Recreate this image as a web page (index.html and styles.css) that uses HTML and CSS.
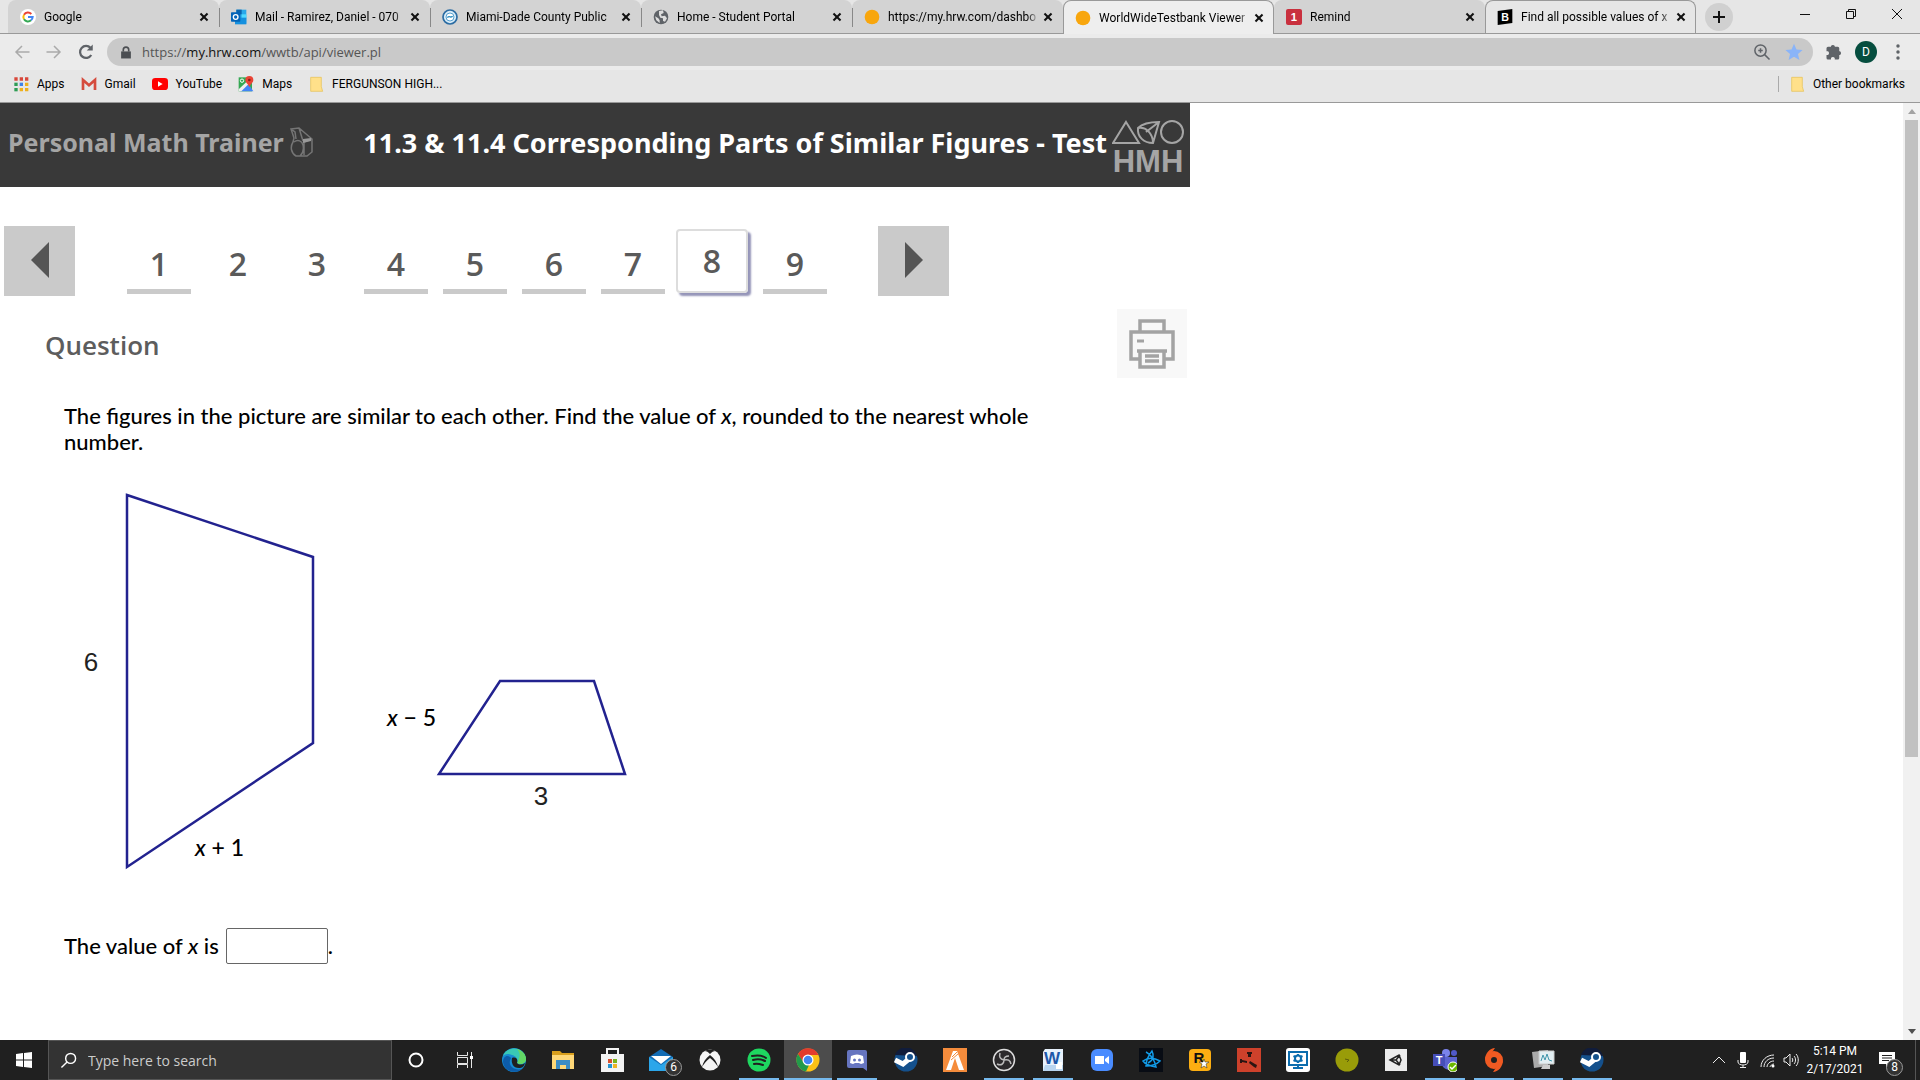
FILE: index.html
```
<!DOCTYPE html>
<html lang="en">
<head>
<meta charset="utf-8">
<title>WorldWideTestbank Viewer</title>
<link rel="stylesheet" href="styles.css">
</head>
<body>

<!-- browser tabs -->
<div class="tabstrip">
	<div class="tab">
		<svg class="favicon" viewBox="0 0 24 24"><circle cx="12" cy="12" r="12" fill="#fff"/><path d="M17 7.500A7 7 0 0 0 6 8.500" fill="none" stroke="#ea4335" stroke-width="3"/><path d="M6 8.500a7 7 0 0 0 0 7" fill="none" stroke="#fbbc05" stroke-width="3"/><path d="M6 15.500a7 7 0 0 0 10.500 1.500" fill="none" stroke="#34a853" stroke-width="3"/><path d="M12 12h7a7 7 0 0 1-2.500 5" fill="none" stroke="#4285f4" stroke-width="3"/></svg>
		<span class="tab-title">Google</span><button class="close" aria-label="Close"></button>
	</div>
	<div class="tab">
		<svg class="favicon" viewBox="0 0 24 24"><path d="M8 1h15v21H8z" fill="#28a8ea"/><path d="M8 1h8v7H8z" fill="#0a64ad"/><path d="M16 8h7v6h-7z" fill="#50d9ff"/><path d="M6 13l17 0v10H6z" fill="#1490df"/><rect y="5" width="14" height="14" rx="1" fill="#0364b8"/><circle cx="7" cy="12" r="3.500" fill="none" stroke="#fff" stroke-width="2"/></svg>
		<span class="tab-title">Mail - Ramirez, Daniel - 070</span><button class="close" aria-label="Close"></button>
	</div>
	<div class="tab">
		<svg class="favicon" viewBox="0 0 24 24"><circle cx="12" cy="12" r="10.500" fill="#d9ecf8" stroke="#2b6ca3" stroke-width="2.500"/><circle cx="12" cy="12" r="6" fill="#fff" stroke="#5aa2d0" stroke-width="1.500"/><path d="M8 13c3-4 5 1 8-2" fill="none" stroke="#2b8cc0" stroke-width="2"/></svg>
		<span class="tab-title">Miami-Dade County Public</span><button class="close" aria-label="Close"></button>
	</div>
	<div class="tab">
		<svg class="favicon" viewBox="0 0 24 24"><circle cx="12" cy="12" r="11" fill="#5f6368"/><path d="M9 3l6-1 1 4-4 2 1 3 5-1 3 4-3 5-3-1v-4l-4-1-2-4zM3 11l5 3 2 3v4l-5-4z" fill="#ddd"/></svg>
		<span class="tab-title">Home - Student Portal</span><button class="close" aria-label="Close"></button>
	</div>
	<div class="tab">
		<svg class="favicon" viewBox="0 0 24 24"><circle cx="12" cy="12" r="11" fill="#f8a60d"/></svg>
		<span class="tab-title">https://my.hrw.com/dashbo</span><button class="close" aria-label="Close"></button>
	</div>
	<div class="tab active">
		<svg class="favicon" viewBox="0 0 24 24"><circle cx="12" cy="12" r="11" fill="#f8a60d"/></svg>
		<span class="tab-title">WorldWideTestbank Viewer</span><button class="close" aria-label="Close"></button>
	</div>
	<div class="tab">
		<svg class="favicon" viewBox="0 0 24 24"><rect width="24" height="24" rx="3" fill="#c9303e"/><text x="12" y="18" class="icon-text" font-size="17">1</text></svg>
		<span class="tab-title">Remind</span><button class="close" aria-label="Close"></button>
	</div>
	<div class="tab light">
		<svg class="favicon" viewBox="0 0 24 24"><path d="M1 3l22-3v21L1 24z"/><text x="12" y="18" class="icon-text" font-size="16">B</text></svg>
		<span class="tab-title">Find all possible values of x</span><button class="close" aria-label="Close"></button>
	</div>
	<button class="new-tab" aria-label="New tab"></button>
	<div class="window-buttons">
		<button aria-label="Minimize"><svg viewBox="0 0 12 12"><path d="M1 6.500h10"/></svg></button>
		<button aria-label="Restore"><svg viewBox="0 0 12 12"><path d="M1.500 3.500h7v7h-7zM3.500 3.500v-2h7v7h-2"/></svg></button>
		<button aria-label="Close window"><svg viewBox="0 0 12 12"><path d="M1 1l10 10M11 1L1 11"/></svg></button>
	</div>
</div>

<!-- address bar -->
<div class="toolbar">
	<button class="nav-btn faded" aria-label="Back"><svg viewBox="0 0 24 24"><path d="M22 12H4M12 4l-8 8 8 8"/></svg></button>
	<button class="nav-btn faded" aria-label="Forward"><svg viewBox="0 0 24 24"><path d="M2 12h18M12 4l8 8-8 8"/></svg></button>
	<button class="nav-btn" aria-label="Reload"><svg viewBox="0 0 24 24"><path d="M19 16a8 8 0 1 1-1-9.500"/><path d="M21 2v8h-8z" fill="#5f6368" stroke="none"/></svg></button>
	<div class="omnibox">
		<svg class="lock" viewBox="0 0 24 24"><path d="M3 10h18v13H3z" fill="#4b4e52"/><path d="M7 10V7a5 5 0 0 1 10 0v3" fill="none" stroke="#4b4e52" stroke-width="3"/></svg>
		<span class="url">https://<b>my.hrw.com</b>/wwtb/api/viewer.pl</span>
		<button class="nav-btn" aria-label="Zoom"><svg viewBox="0 0 24 24"><circle cx="10" cy="10" r="7.500" stroke-width="2"/><path d="M15.500 15.500L22 22M7 10h6M10 7v6" stroke-width="2"/></svg></button>
		<button class="nav-btn" aria-label="Bookmark"><svg viewBox="0 0 24 24"><path d="M12 1l3.300 7.500 8.200.7-6.200 5.400 1.900 8L12 18.300 4.800 22.600l1.900-8L.5 9.200l8.200-.7z" fill="#8ab4f8" stroke="none"/></svg></button>
	</div>
	<button class="nav-btn" aria-label="Extensions"><svg viewBox="0 0 24 24"><path d="M20 11h-1V7a2 2 0 0 0-2-2h-4V4a3 3 0 0 0-5 0v1H4a2 2 0 0 0-2 2v4h2a3 3 0 0 1 0 5H2v4a2 2 0 0 0 2 2h4v-2a3 3 0 0 1 5 0v2h4a2 2 0 0 0 2-2v-4h1a3 3 0 0 0 0-5z" fill="#5f6368" stroke="none"/></svg></button>
	<button class="avatar">D</button>
	<button class="nav-btn" aria-label="Menu"><svg viewBox="0 0 24 24"><g fill="#5f6368" stroke="none"><circle cx="12" cy="4" r="2.300"/><circle cx="12" cy="12" r="2.300"/><circle cx="12" cy="20" r="2.300"/></g></svg></button>
</div>

<div class="bookmarks">
	<a href="#"><svg viewBox="0 0 24 24"><path d="M2 2h5v5H2zM10 2h5v5h-5zM18 2h5v5h-5z" fill="#d8473a"/><path d="M2 10h5v5H2z" fill="#2e9c55"/><path d="M10 10h5v5h-5z" fill="#3f83e8"/><path d="M18 10h5v5h-5zM10 18h5v5h-5zM18 18h5v5h-5z" fill="#eeb01d"/><path d="M2 18h5v5H2z" fill="#2e9c55"/></svg>Apps</a>
	<a href="#"><svg viewBox="0 0 24 24"><path d="M3 21V6l9 8 9-8v15" fill="none" stroke="#d54b3d" stroke-width="4"/></svg>Gmail</a>
	<a href="#"><svg viewBox="0 0 24 24"><rect y="3" width="24" height="18" rx="5" fill="#f00"/><path d="M9 8l7 4-7 4z" fill="#fff"/></svg>YouTube</a>
	<a href="#"><svg viewBox="0 0 24 24"><path d="M1 2h20v21H1z" fill="#34a853"/><path d="M3 23L15 11l8 12z" fill="#4285f4"/><path d="M1 20L19 3l3 3L5 23H1z" fill="#eee"/><path d="M17 0a6 6 0 0 1 6 6c0 4-4 5-6 11-2-6-6-7-6-11a6 6 0 0 1 6-6z" fill="#ea4335"/><circle cx="17" cy="6" r="2" fill="#8c1e17"/><circle cx="6" cy="7" r="2.500" fill="none" stroke="#fff" stroke-width="1.500"/></svg>Maps</a>
	<a href="#"><svg viewBox="0 0 24 24"><path d="M4 2h16v14l2 7H4z" fill="#ffe08a" stroke="#e5c04f"/></svg>FERGUNSON HIGH...</a>
	<a href="#" class="other"><svg viewBox="0 0 24 24"><path d="M4 2h16v14l2 7H4z" fill="#ffe08a" stroke="#e5c04f"/></svg>Other bookmarks</a>
</div>

<!-- page -->
<div class="viewport">
	<main class="trainer">
		<header class="banner">
			<span class="brand">Personal Math Trainer</span>
			<svg class="whistle" viewBox="0 0 24 30"><path d="M1 2l8-1 13 11v13l-5 4-11 0c-5-3-6-9-3-14l1-4zM9 1l4 13M14 15v13M22 12l-8 3M4 15c4-3 8-1 9 3s0 8-3 11M1 2l4 3 1 7" fill="none" stroke="#757575" stroke-width="1.500"/><path d="M13 12l8-1v3l-8 2z" fill="#999"/></svg>
			<h1>11.3 &amp; 11.4 Corresponding Parts of Similar Figures - Test</h1>
			<svg class="hmh" viewBox="0 0 72 54"><g fill="none" stroke="#a5a5a5" stroke-width="2"><path d="M14 3l13 21H1z"/><path d="M26 9c5-5 13-6 21-6l-6 21C32 24 25 18 26 9zM26 9c8-2 15 6 15 15M47 3L34 13"/><circle cx="60" cy="13" r="11"/></g><text x="36" y="53" class="hmh-text">HMH</text></svg>
		</header>

		<nav class="pager">
			<button class="arrow" aria-label="Previous"><svg viewBox="0 0 18 36"><path d="M18 0v36L0 18z"/></svg></button>
			<ol class="numbers">
				<li class="done"><a href="#">1</a></li>
				<li><a href="#">2</a></li>
				<li><a href="#">3</a></li>
				<li class="done"><a href="#">4</a></li>
				<li class="done"><a href="#">5</a></li>
				<li class="done"><a href="#">6</a></li>
				<li class="done"><a href="#">7</a></li>
				<li class="current"><a href="#">8</a></li>
				<li class="done"><a href="#">9</a></li>
			</ol>
			<button class="arrow" aria-label="Next"><svg viewBox="0 0 18 36"><path d="M0 0v36l18-18z"/></svg></button>
		</nav>

		<div class="question-head">
			<h2>Question</h2>
			<button class="print" aria-label="Print"><svg viewBox="0 0 46 50"><path d="M11 13V2h24v11M11 40H2V13h42v27h-9M8 32h30M11 32v16h24V32M16 37h14M16 42h14" fill="none" stroke="#a3a3a3" stroke-width="3.500"/><path d="M8 22h7" stroke="#a3a3a3" stroke-width="3"/></svg></button>
		</div>

		<section class="question">
			<p>The figures in the picture are similar to each other. Find the value of <i>x</i>, rounded to the nearest whole number.</p>
			<svg class="figure" width="600" height="400" viewBox="0 0 600 400">
				<path d="M63 15l186 62v186L63 387z"/>
				<path d="M436 201h94l31 93H375z"/>
				<text x="27" y="191" class="side">6</text>
				<text x="477" y="325" class="side">3</text>
				<text x="323" y="246"><tspan class="var">x</tspan> − 5</text>
				<text x="131" y="376"><tspan class="var">x</tspan> + 1</text>
			</svg>
			<p class="answer"><label for="answer">The value of <i>x</i> is</label><input id="answer" type="text">.</p>
		</section>
	</main>
	<div class="scrollbar"><span class="up"></span><span class="thumb"></span><span class="down"></span></div>
</div>

<!-- taskbar -->
<footer class="taskbar">
	<button class="start" aria-label="Start"><svg viewBox="0 0 16 16"><path d="M0 2l7-1v6.500H0zM8 1l8-1v7.500H8zM0 8.500h7V15l-7-1zM8 8.500h8V16l-8-1z" fill="#fff"/></svg></button>
	<label class="search"><svg viewBox="0 0 24 24"><circle cx="15" cy="9" r="7"/><path d="M10 14l-8 8"/></svg><input type="text" placeholder="Type here to search" aria-label="Search"></label>
	<div class="apps">
		<button class="app" aria-label="Cortana"><svg viewBox="0 0 24 24"><circle cx="12" cy="12" r="6.500" fill="none" stroke="#fff" stroke-width="2"/></svg></button>
		<button class="app" aria-label="Task View"><svg viewBox="0 0 24 24"><path d="M4.500 4v3.500h10V4M4.500 9.500h10v6h-10zM4.500 20v-3.500h10V20M18.500 4v16" fill="none" stroke="#e6e6e6" stroke-width="1"/><path d="M17 8h3v3h-3z" fill="#fff"/></svg></button>
		<button class="app" aria-label="Edge"><svg viewBox="0 0 24 24"><circle cx="12" cy="12" r="12" fill="#168bd2"/><path d="M1 8C4-2 22-3 24 11c0 5-6 6-9 4 2-3-1-7-5-8C6 5 3 6 1 8z" fill="#39c9b5"/><path d="M15 1c6 2 9 6 9 10 0 5-6 6-9 4 3-6 4-9 0-14z" fill="#62d765"/><path d="M9 10c-4 7 2 13 11 11-7 6-18 2-19-7 0-6 5-8 8-4z" fill="#0d5ca9"/><path d="M10 10c5-2 6 3 5 5 2 2 5 2 8 0-1 4-3 5-6 5-6 0-8-5-7-10z" fill="#202020"/></svg></button>
		<button class="app" aria-label="File Explorer"><svg viewBox="0 0 24 24"><path d="M1 3h8l2 2h12v16H1z" fill="#d99f1d"/><path d="M1 7h22v14H1z" fill="#ffd878"/><path d="M5 21v-9h14v9h-4v-4H9v4z" fill="#3d8dc4"/></svg></button>
		<button class="app" aria-label="Store"><svg viewBox="0 0 24 24"><path d="M1 6h23v18H1z" fill="#f3f3f3"/><path d="M7 7V1h11v6" fill="none" stroke="#f3f3f3" stroke-width="2"/><path d="M8 11h4v4H8z" fill="#d8502e"/><path d="M13 11h4v4h-4z" fill="#7ab51d"/><path d="M8 16h4v4H8z" fill="#2694d1"/><path d="M13 16h4v4h-4z" fill="#f0b323"/></svg></button>
		<button class="app" aria-label="Mail"><svg viewBox="0 0 24 24"><path d="M0 9L12 1l12 8v14H0z" fill="#126cb5"/><path d="M0 9l12 8 12-8v14H0z" fill="#2ba6ea"/><path d="M2 8h20l-10 8z" fill="#fff"/></svg><span class="badge">6</span></button>
		<button class="app" aria-label="Xbox"><svg viewBox="0 0 24 24"><circle cx="12" cy="12" r="10.500" fill="#f4f4f4"/><path d="M6 3c3 0 4 1 6 3 2-2 3-3 6-3-2-1-4-1.500-6-1.500S8 2 6 3z" fill="#202020"/><path d="M4 19c1-5 4-9 8-12 4 3 7 7 8 12-2-3-4-6-8-9-4 3-6 6-8 9z" fill="#202020"/></svg></button>
		<button class="app open" aria-label="Spotify"><svg viewBox="0 0 24 24"><circle cx="12" cy="12" r="11.500" fill="#1ed760"/><path d="M5 8c5-1 10-1 14 2M6 12c4-1 8-1 12 1M7 16c3-1 6 0 9 1" fill="none" stroke="#202020" stroke-width="2" stroke-linecap="round"/></svg></button>
		<button class="app open focus" aria-label="Chrome"><svg viewBox="0 0 24 24"><circle cx="12" cy="12" r="11.500" fill="#fbc116"/><path d="M2 6a11.500 11.500 0 0 1 20.500 1H12l-5 7z" fill="#e33b2e"/><path d="M2 6l6 9 5 2-3 6.400A11.500 11.500 0 0 1 2 6z" fill="#229a4b"/><circle cx="12" cy="12" r="5.500" fill="#fff"/><circle cx="12" cy="12" r="4.300" fill="#4285f4"/></svg></button>
		<button class="app open" aria-label="Discord"><svg viewBox="0 0 24 24"><path d="M4 2h16a2 2 0 0 1 2 2v19l-4-3H4a2 2 0 0 1-2-2V4a2 2 0 0 1 2-2z" fill="#6675c0"/><path d="M6 8c4-2 8-2 12 0l1 7-3 1-2-1h-4l-2 1-3-1z" fill="#fff"/><circle cx="9.500" cy="12" r="1.500" fill="#6675c0"/><circle cx="14.500" cy="12" r="1.500" fill="#6675c0"/></svg></button>
		<button class="app" aria-label="Steam"><svg viewBox="0 0 24 24"><circle cx="12" cy="12" r="11.500" fill="#14508c"/><path d="M1 7A11.500 11.500 0 0 1 23 8z" fill="#101c3b"/><path d="M1 12l8 4 6-5" fill="none" stroke="#fff" stroke-width="5"/><circle cx="16" cy="9" r="4" fill="#14508c" stroke="#fff" stroke-width="2"/></svg></button>
		<button class="app" aria-label="FiveM"><svg viewBox="0 0 24 24"><path d="M0 0h24v24H0z" fill="#f58c3c"/><path d="M3 22L10 3h4l7 19h-5l-4-12-4 12z" fill="#fff"/><path d="M9 9l5-5M8 12l7-6" stroke="#f58c3c"/></svg></button>
		<button class="app open" aria-label="OBS"><svg viewBox="0 0 24 24"><circle cx="12" cy="12" r="10.500" fill="#2b292b" stroke="#ddd" stroke-width="1.500"/><path d="M8 5c-1 4 0 6 4 7 4-1 6 0 7 4M12 12c0 4-3 6-7 4M12 12c0-3 2-4 5-4" fill="none" stroke="#bbb" stroke-width="1.500"/></svg></button>
		<button class="app open" aria-label="Word"><svg viewBox="0 0 24 24"><path d="M4 1h18v22H2V4z" fill="#e7f1fc"/><path d="M4 17h18v6H2z" fill="#b9d5f0"/><path d="M15 14h6v7h-6z" fill="#fff"/><text x="11" y="16" font-size="17" class="icon-text word">W</text></svg></button>
		<button class="app" aria-label="Zoom"><svg viewBox="0 0 24 24"><rect x="1" y="1" width="22" height="22" rx="6" fill="#4a8cff"/><path d="M5 8h9v8H5zM15 11l4-3v8l-4-3z" fill="#fff"/></svg></button>
		<button class="app" aria-label="Battle.net"><svg viewBox="0 0 24 24"><path d="M0 0h24v24H0z" fill="#080c14"/><path d="M7 4c4 2 9 8 10 15-6-1-11-3-13-6 4-3 10-4 17 0-3 3-9 5-14 5 0-5 2-10 6-15 2 4 2 9-4 12" fill="none" stroke="#129be8" stroke-width="1.500"/></svg></button>
		<button class="app" aria-label="Rockstar"><svg viewBox="0 0 24 24"><rect x="1" y="1" width="22" height="22" rx="4" fill="#fcae12"/><text x="11" y="15" font-size="15" class="icon-text dark">R</text><path d="M16 11l1 3h4l-3 2 1 4-3-2-3 2 1-4-3-2h4z" fill="#fff" stroke="#222" stroke-width=".5"/></svg></button>
		<button class="app" aria-label="Rust"><svg viewBox="0 0 24 24"><path d="M0 0h24v24H0z" fill="#cd412b"/><path d="M10 4h5v2h-1v3h-3V6h-1zM3 11h2v1l5 1v2l-5-1v1H3zM13 13l5 3 2 1-1 3-2-1-5-4z" fill="#2a1512"/></svg></button>
		<button class="app" aria-label="Settings tool"><svg viewBox="0 0 24 24"><rect width="24" height="24" rx="3" fill="#fff"/><path d="M3 4h18v13H3zM7 20h10M12 17v3" fill="none" stroke="#0c6dae" stroke-width="2"/><circle cx="12" cy="10.500" r="3" fill="none" stroke="#0c6dae" stroke-width="2"/><path d="M12 6v2M12 13v2M7.500 8l2 1M14.500 12l2 1M7.500 13l2-1M14.500 9l2-1" stroke="#0c6dae" stroke-width="2"/></svg></button>
		<button class="app" aria-label="Tennis ball"><svg viewBox="0 0 24 24"><circle cx="12" cy="12" r="11.500" fill="#999c09"/><path d="M10 11l4 1-2 2" stroke="#5b5d0b" fill="none"/></svg></button>
		<button class="app" aria-label="Unity"><svg viewBox="0 0 24 24"><path d="M1 1h22v22H1z" fill="#ececec"/><path d="M6 12l9-5 2 5-2 5zM6 12h6M12 12l4-5M12 12l4 5" fill="none" stroke="#222" stroke-width="1.500"/></svg></button>
		<button class="app open" aria-label="Teams"><svg viewBox="0 0 24 24"><circle cx="13" cy="5" r="4" fill="#7b83eb"/><circle cx="21" cy="5" r="3" fill="#5059c9"/><path d="M8 9h16v8a7 7 0 0 1-7 5c-5 0-9-4-9-9z" fill="#5b63d0"/><path d="M0 6h12v12H0z" fill="#464eb8"/><text x="6" y="16" font-size="11" class="icon-text">T</text><circle cx="20" cy="19" r="5" fill="#6bb700" stroke="#fff"/><path d="M17 19l2 2 4-4" fill="none" stroke="#fff" stroke-width="1.500"/></svg></button>
		<button class="app open" aria-label="Origin"><svg viewBox="0 0 24 24"><circle cx="12" cy="12" r="6" fill="none" stroke="#f05a22" stroke-width="6"/><path d="M13 0c-5 0-10 5-10 12l6-6zM11 24c5 0 10-5 10-12l-6 6z" fill="#f05a22"/></svg></button>
		<button class="app open" aria-label="Monitor"><svg viewBox="0 0 24 24"><path d="M1 4l16-2v16L3 20z" fill="#aaa"/><path d="M8 3h15v13H8z" fill="#e2eef2" stroke="#ccc"/><path d="M10 13l2-6 2 5 2-6 2 6 3 1" fill="none" stroke="#4196ac"/><path d="M12 17h7v4h-9z" fill="#ccc"/></svg></button>
		<button class="app open" aria-label="Steam"><svg viewBox="0 0 24 24"><circle cx="12" cy="12" r="11.500" fill="#14508c"/><path d="M1 7A11.500 11.500 0 0 1 23 8z" fill="#101c3b"/><path d="M1 12l8 4 6-5" fill="none" stroke="#fff" stroke-width="5"/><circle cx="16" cy="9" r="4" fill="#14508c" stroke="#fff" stroke-width="2"/></svg></button>
	</div>
	<div class="tray">
		<svg viewBox="0 0 16 16"><path d="M2 11l6-6 6 6"/></svg>
		<svg viewBox="0 0 16 16"><rect x="5" y="0" width="6" height="11" rx="1" fill="#fff" stroke="none"/><path d="M3 8v2c0 4 10 4 10 0V8M8 13v3M5 15.500h6"/></svg>
		<svg viewBox="0 0 16 16"><path d="M2 15C2 8 8 3 15 3M5 15c0-5 4-9 10-9M8 15c0-3 3-6 7-6M11 15c0-1 2-3 4-3"/><circle cx="14" cy="14" r="1.500" fill="#fff" stroke="none"/></svg>
		<svg viewBox="0 0 16 16"><path d="M1 6h2l4-4v12l-4-4H1zM9 6c1 1 1 3 0 4M11 4c2 2 2 6 0 8M13 2c3 3 3 9 0 12"/></svg>
	</div>
	<div class="clock"><span>5:14 PM</span><span>2/17/2021</span></div>
	<button class="notice" aria-label="Notifications"><svg viewBox="0 0 16 16"><path d="M0 0h16v12h-5l-4 4v-4H0z" fill="#fff"/><path d="M3 3.500h10M3 6h10M3 8.500h7" stroke="#202020"/></svg><span class="badge">8</span></button>
</footer>
</body>
</html>
```
FILE: styles.css
```
* {
	box-sizing: border-box;
}
body {
	margin: 0;
	height: 100vh;
	display: flex;
	flex-direction: column;
	overflow: hidden;
	background: #fff;
	color: #000;
	font-family: Roboto, "Noto Sans", sans-serif;
	font-size: 12px;
}
button {
	border: 0;
	padding: 0;
	background: none;
	color: inherit;
	font: inherit;
}
a {
	color: inherit;
	text-decoration: none;
}
svg {
	display: block;
	flex: none;
}
.icon-text {
	fill: #fff;
	font-family: "Liberation Sans", sans-serif;
	font-weight: bold;
	text-anchor: middle;
}
.word {
	fill: #1d57a8;
}
.dark {
	fill: #111;
}

/* tabs */
.tabstrip {
	display: flex;
	height: 34px;
	padding-left: 8px;
	background: #e6e6e6;
	border-bottom: 1px solid #999;
}
.tab {
	flex: 0 1 211px;
	min-width: 0;
	display: flex;
	align-items: center;
	gap: 8px;
	padding: 0 7px 0 12px;
	background: #d3d3d3;
	border-radius: 8px 8px 0 0;
	position: relative;
}
.tab + .tab::before {
	content: "";
	position: absolute;
	left: 0;
	top: 8px;
	height: 19px;
	border-left: 1px solid #888;
}
.tab.active,
.tab.light {
	background: #eee;
	border: 1px solid #999;
	border-bottom: 0;
	padding: 0 6px 0 11px;
}
.tab.active {
	margin-bottom: -1px;
}
.tab.light {
	background: #e6e6e6;
}
.tab.active::before,
.tab.light::before,
.tab.active + .tab::before {
	display: none;
}
.favicon {
	width: 16px;
	height: 16px;
}
.tab-title {
	flex: 1;
	margin-right: -7px;
	overflow: hidden;
	white-space: nowrap;
	-webkit-mask-image: linear-gradient(to right, #000 92%, transparent);
	mask-image: linear-gradient(to right, #000 92%, transparent);
}
.close,
.new-tab {
	width: 16px;
	height: 16px;
	position: relative;
}
.close::before,
.close::after,
.new-tab::before,
.new-tab::after {
	content: "";
	position: absolute;
	left: 3px;
	top: 7px;
	width: 10px;
	height: 2px;
	background: #111;
	transform: rotate(45deg);
}
.close::after {
	transform: rotate(-45deg);
}
.new-tab {
	width: 28px;
	height: 28px;
	margin: 3px 0 0 9px;
	border-radius: 50%;
	background: #d0d0d0;
}
.new-tab::before,
.new-tab::after {
	left: 8px;
	top: 13px;
	width: 12px;
	transform: none;
}
.new-tab::after {
	transform: rotate(90deg);
}
.window-buttons {
	margin-left: auto;
	display: flex;
}
.window-buttons button {
	width: 46px;
	height: 28px;
	display: flex;
	align-items: center;
	justify-content: center;
}
.window-buttons svg {
	width: 12px;
	height: 12px;
	fill: none;
	stroke: #111;
}

/* address bar */
.toolbar {
	display: flex;
	align-items: center;
	height: 36px;
	padding: 0 13px;
	gap: 12px;
	background: #ebebeb;
}
.nav-btn svg {
	width: 18px;
	height: 18px;
	fill: none;
	stroke: #5f6368;
	stroke-width: 3;
}
.nav-btn.faded {
	margin-right: 2px;
}
.faded svg {
	stroke: #aaa;
	stroke-width: 2;
}
.omnibox {
	flex: 1;
	display: flex;
	align-items: center;
	gap: 14px;
	height: 28px;
	padding: 0 10px 0 12px;
	background: #c9c9c9;
	border-radius: 14px;
}
.toolbar .nav-btn {
	width: 18px;
}
.lock {
	width: 14px;
	height: 13px;
	margin-right: -5px;
}
.url {
	flex: 1;
	font: 13px "Open Sans", sans-serif;
	color: #555;
}
.url b {
	font-weight: normal;
	color: #111;
}
.avatar {
	width: 22px;
	height: 22px;
	border-radius: 50%;
	background: #064e3f;
	color: #fff;
}
.bookmarks {
	display: flex;
	align-items: center;
	height: 33px;
	padding: 0 15px 4px 13px;
	gap: 16px;
	background: #e6e6e6;
	border-bottom: 1px solid #999;
}
.bookmarks a {
	display: flex;
	align-items: center;
	gap: 8px;
}
.bookmarks svg {
	width: 16px;
	height: 16px;
}
.other {
	margin-left: auto;
	padding-left: 10px;
	border-left: 1px solid #aaa;
}

/* page */
.viewport {
	flex: 1;
	min-height: 0;
	display: flex;
	justify-content: space-between;
	font-family: "Open Sans", "Noto Sans", sans-serif;
}
.trainer {
	flex: 0 1 1190px;
}
.banner {
	display: flex;
	align-items: center;
	height: 84px;
	padding: 0 6px 6px 8px;
	background: #393939;
	font-family: "Noto Sans", "Open Sans", sans-serif;
	font-size: 25px;
	font-weight: bold;
	white-space: nowrap;
}
.brand {
	color: #a5a5a5;
}
.whistle {
	width: 24px;
	height: 30px;
	margin-left: 6px;
}
.banner h1 {
	margin: 0 0 0 auto;
	color: #fff;
	font-size: 27px;
}
.hmh {
	width: 72px;
	height: 54px;
	margin: 7px 0 0 5px;
}
.hmh-text {
	fill: #a5a5a5;
	font: bold 31px "Liberation Sans", sans-serif;
	text-anchor: middle;
}
.pager {
	display: flex;
	margin: 39px 0 0 4px;
}
.arrow {
	width: 71px;
	height: 70px;
	display: flex;
	justify-content: center;
	padding-top: 16px;
	background: #cacaca;
}
.arrow svg {
	width: 18px;
	height: 36px;
	fill: #555;
}
.numbers {
	display: flex;
	gap: 15px;
	margin: 0 51px 0 52px;
	padding: 0;
	list-style: none;
	color: #5a5a5a;
	font-size: 32px;
	font-weight: 600;
	text-align: center;
}
.numbers li {
	width: 64px;
	height: 68px;
	line-height: 76px;
}
.numbers .done {
	border-bottom: 5px solid #cacaca;
}
.numbers .current {
	width: 72px;
	height: 64px;
	margin: 3px 0 0 -4px;
	line-height: 60px;
	border: 2px solid #ddd;
	border-radius: 4px;
	box-shadow: 3px 3px 2px #9494b8;
}
.question-head {
	display: flex;
	justify-content: space-between;
	margin: 13px 3px 0 45px;
}
.question-head h2 {
	margin: 16px 0 0;
	color: #5d5d5d;
	font-size: 26px;
	line-height: 40px;
	font-weight: 600;
}
.print {
	width: 70px;
	height: 69px;
	display: flex;
	align-items: center;
	justify-content: center;
	background: #f8f8f8;
}
.print svg {
	width: 46px;
	height: 50px;
}
.question {
	padding: 25px 140px 0 64px;
	font-family: Lato, "Open Sans", sans-serif;
	font-size: 22px;
	font-weight: 500;
	line-height: 26px;
}
.question p {
	margin: 0;
}
.figure {
	margin-top: 25px;
	overflow: visible;
	font-size: 23px;
}
.figure path {
	fill: none;
	stroke: #22228f;
	stroke-width: 2.5;
}
.var {
	font-style: italic;
}
.figure .side {
	font: 26px "Liberation Sans", sans-serif;
	text-anchor: middle;
	fill: #222;
}
.question .answer {
	display: flex;
	align-items: center;
	margin-top: 48px;
}
.answer input {
	width: 102px;
	height: 36px;
	margin-left: 7px;
	border: 1px solid #666;
	border-radius: 2px;
}
.scrollbar {
	width: 17px;
	display: flex;
	flex-direction: column;
	align-items: center;
	background: #f1f1f1;
}
.scrollbar .thumb {
	width: 13px;
	flex: 0 0 68%;
	background: #c1c1c1;
}
.up,
.down {
	margin: 6px 0;
	border: 4px solid transparent;
	border-top: 0;
	border-bottom: 5px solid #a3a3a3;
}
.down {
	margin-top: auto;
	border-bottom: 0;
	border-top: 5px solid #505050;
}

/* taskbar */
.taskbar {
	display: flex;
	height: 40px;
	background: #202020;
	color: #fff;
}
.start {
	width: 48px;
	padding-left: 16px;
}
.start svg {
	width: 16px;
	height: 16px;
}
.search {
	display: flex;
	align-items: center;
	width: 344px;
	padding-left: 11px;
	gap: 11px;
	background: #333;
	border: 1px solid #555;
}
.search svg {
	width: 17px;
	height: 17px;
	fill: none;
	stroke: #fff;
	stroke-width: 2;
}
.search input {
	flex: 1;
	min-width: 0;
	border: 0;
	padding: 0;
	background: none;
	font: 14px "Open Sans", sans-serif;
}
.search input::placeholder {
	color: #ccc;
}
.apps {
	display: flex;
	gap: 1px;
}
.app {
	display: flex;
	align-items: center;
	justify-content: center;
	width: 48px;
	position: relative;
}
.app svg {
	width: 24px;
	height: 24px;
}
.open::after {
	content: "";
	position: absolute;
	left: 4px;
	right: 4px;
	bottom: 0;
	height: 2px;
	background: #76b9ed;
}
.focus {
	background: #4c4c4c;
}
.focus::after {
	left: 0;
	right: 0;
}
.badge {
	position: absolute;
	right: 3px;
	bottom: 4px;
	width: 17px;
	height: 17px;
	line-height: 15px;
	text-align: center;
	font-size: 12px;
	background: #333;
	border: 1px solid #999;
	border-radius: 50%;
}
.tray {
	display: flex;
	align-items: center;
	gap: 8px;
	margin-left: auto;
}
.tray svg {
	width: 16px;
	height: 16px;
	fill: none;
	stroke: #eee;
}
.clock {
	width: 72px;
	display: flex;
	flex-direction: column;
	justify-content: center;
	text-align: center;
	line-height: 18px;
}
.notice {
	width: 45px;
	padding-left: 8px;
	position: relative;
	border-right: 1px solid #555;
	margin-right: 4px;
}
.notice svg {
	width: 16px;
	height: 16px;
}
.notice .badge {
	right: 12px;
}
```
